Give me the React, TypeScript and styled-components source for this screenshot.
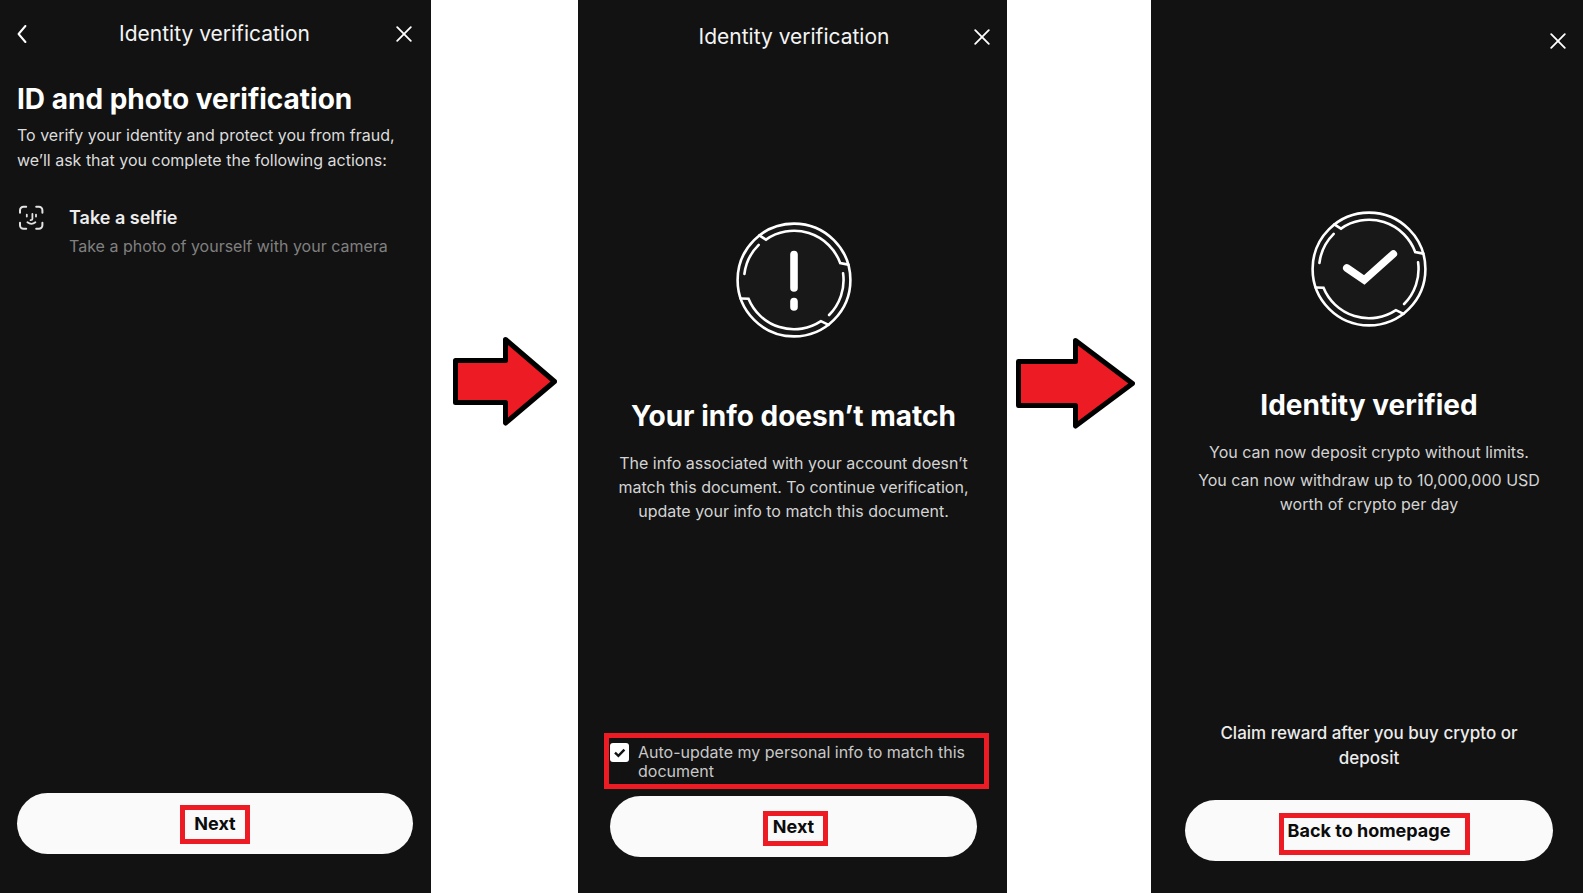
import React from 'react';
import styled, { createGlobalStyle } from 'styled-components';

const GlobalStyle = createGlobalStyle`
  *, *::before, *::after { box-sizing: border-box; }
  body {
    margin: 0;
    background: #ffffff;
    font-family: Inter, "Noto Sans", sans-serif;
    font-size: 16px;
    line-height: 24px;
  }
  h1, h2, h3, p { margin: 0; }
`;

const Flow = styled.main`
  display: grid;
  grid-template-columns: 431fr 147fr 429fr 144fr 432fr;
  min-height: 100vh;
`;

const Screen = styled.section`
  display: flex;
  flex-direction: column;
  min-width: 0;
  background: #121212;
  color: #ffffff;
`;

const Header = styled.header<{ $height: number }>`
  display: grid;
  grid-template-columns: 1fr auto 1fr;
  align-items: center;
  height: ${(p) => p.$height}px;
  padding: 0 17px 0 20px;
`;

const BackHeader = styled(Header)`
  padding: 0 19px 0 17px;
`;

const Title = styled.h2`
  grid-column: 2;
  font-size: 21px;
  font-weight: 400;
  line-height: 26px;
  color: #f4f4f4;
`;

const IconButton = styled.button<{ $end?: boolean }>`
  grid-column: ${(p) => (p.$end ? 3 : 1)};
  justify-self: ${(p) => (p.$end ? 'end' : 'start')};
  display: flex;
  padding: 0;
  border: 0;
  background: none;
  color: #ffffff;
  cursor: pointer;
`;

const Body = styled.div<{ $bottom: number; $left?: number }>`
  display: flex;
  flex-direction: column;
  flex: 1;
  padding: 0 30px ${(p) => p.$bottom}px ${(p) => p.$left ?? 32}px;
`;

const IntroBody = styled(Body)`
  padding: 15px 18px ${(p) => p.$bottom}px 17px;
`;

const Heading = styled.h1`
  font-size: 28px;
  font-weight: 700;
  line-height: 34px;
`;

const Lead = styled.p`
  margin-top: 7px;
  line-height: 25px;
  color: #dcdcdc;
`;

const Step = styled.div`
  display: flex;
  align-items: flex-start;
  gap: 24px;
  margin-top: 32px;
`;

const StepTitle = styled.h3`
  font-size: 18px;
  font-weight: 600;
  line-height: 26px;
  color: #ececec;
`;

const StepNote = styled.p`
  margin-top: 3px;
  color: #808080;
`;

const Result = styled.div<{ $top: number }>`
  display: flex;
  flex-direction: column;
  align-items: center;
  padding-top: ${(p) => p.$top}px;
  text-align: center;
`;

const ResultHeading = styled(Heading)`
  margin-top: 59px;
`;

const ResultText = styled.div`
  display: flex;
  flex-direction: column;
  gap: 4px;
  margin-top: 18px;
  color: #d4d4d4;
`;

const Footer = styled.footer`
  display: flex;
  flex-direction: column;
  margin-top: auto;
`;

const Claim = styled.p`
  margin-bottom: 29px;
  padding: 0 24px;
  font-size: 17px;
  font-weight: 500;
  line-height: 25px;
  text-align: center;
  color: #ececec;
`;

const Consent = styled.label`
  display: flex;
  align-items: flex-start;
  gap: 9px;
  margin: 0 -12px 7px -6px;
  padding: 5px 8px 3px 1px;
  border: 5px solid #ed1c24;
  line-height: 19px;
  color: #c8c8c8;
  cursor: pointer;
`;

const CheckFrame = styled.span`
  position: relative;
  display: flex;
  flex: none;
`;

const CheckInput = styled.input`
  appearance: none;
  width: 19px;
  height: 19px;
  margin: 0;
  border-radius: 3px;
  background: #ffffff;

  &:not(:checked) + svg { display: none; }
`;

const CheckMark = styled.svg`
  position: absolute;
  top: 0;
  left: 0;
  pointer-events: none;
`;

const Pill = styled.button`
  display: flex;
  align-items: center;
  justify-content: center;
  height: 61px;
  padding: 0;
  border: 0;
  border-radius: 31px;
  background: #fafafa;
  color: #0c0c0c;
  font: 700 18px/25px Inter, "Noto Sans", sans-serif;
  cursor: pointer;
`;

const PillLabel = styled.span<{ $frame: string }>`
  position: relative;

  &::after {
    content: "";
    position: absolute;
    inset: ${(p) => p.$frame};
    border: 5px solid #ed1c24;
  }
`;

const Connector = styled.div<{ $shift?: number }>`
  display: flex;
  justify-content: center;
  align-items: flex-start;
  padding: 337px ${(p) => p.$shift ?? 0}px 0 0;
`;

const Close = () => (
  <IconButton $end type="button" aria-label="Close">
    <svg width="16" height="16" viewBox="0 0 16 16" fill="none" stroke="currentColor" strokeWidth="1.8" strokeLinecap="round">
      <path d="M1.2 1.2 14.8 14.8M14.8 1.2 1.2 14.8" />
    </svg>
  </IconButton>
);

const FaceScan = () => (
  <svg width="28" height="26" viewBox="0 0 28 26" fill="none" stroke="#e4e4e4" strokeWidth="2" strokeLinecap="round">
    <path d="M3 7.7V5.2a3.5 3.5 0 0 1 3.5-3.5h2.7M19.2 1.7h2.7a3.5 3.5 0 0 1 3.5 3.5v2.5M25.4 17.7v2.5a3.5 3.5 0 0 1-3.5 3.5h-2.7M9.2 23.7H6.5A3.5 3.5 0 0 1 3 20.2v-2.5" />
    <path d="M9.8 9.6v2M19 9.6v2M15.4 9v5q0 1.2-1.8 1.2" strokeWidth="1.8" />
    <path d="M10.4 17.3q4 3.2 8 0" strokeWidth="1.8" />
  </svg>
);

const Seal = ({ children }: { children: React.ReactNode }) => (
  <svg width="120" height="120" viewBox="-60 -60 120 120" fill="none" stroke="#ffffff" strokeWidth="2.6" strokeLinecap="round">
    <circle r="56.4" fill="#181818" />
    <path d="M-34.7-44.6-28-40.4A49.2 49.2 0 0 1 46.2-17L54.4-15.4" />
    <path d="M34.5 44.9 27 41.2A49.2 49.2 0 0 1-45.5 18.8L-53.4 18.5" />
    <path d="M-35.3-35.2A49.8 49.8 0 0 0-49.6-6M49.1-6.6A49.5 49.5 0 0 1 35.1 35" />
    {children}
  </svg>
);

const Arrow = ({ width, height, points }: { width: number; height: number; points: string }) => (
  <svg width={width} height={height} viewBox={`0 0 ${width} ${height}`} aria-hidden="true">
    <polygon points={points} fill="#ed1c24" stroke="#000000" strokeWidth="5" strokeLinejoin="round" />
  </svg>
);

export default function App() {
  return (
    <>
      <GlobalStyle />
      <Flow>
        <Screen>
          <BackHeader $height={67}>
            <IconButton type="button" aria-label="Back">
              <svg width="10" height="18" viewBox="0 0 10 18" fill="none" stroke="currentColor" strokeWidth="2" strokeLinecap="round" strokeLinejoin="round">
                <path d="M8.4 1 1.6 9l6.8 8" />
              </svg>
            </IconButton>
            <Title>Identity verification</Title>
            <Close />
          </BackHeader>
          <IntroBody $bottom={39}>
            <Heading>ID and photo verification</Heading>
            <Lead>To verify your identity and protect you from fraud, we’ll ask that you complete the following actions:</Lead>
            <Step>
              <FaceScan />
              <div>
                <StepTitle>Take a selfie</StepTitle>
                <StepNote>Take a photo of yourself with your camera</StepNote>
              </div>
            </Step>
            <Footer>
              <Pill type="button">
                <PillLabel $frame="-6px -14px -8px">Next</PillLabel>
              </Pill>
            </Footer>
          </IntroBody>
        </Screen>

        <Connector>
          <Arrow width={104} height={89} points="2.5,23.5 52.5,23.5 52.5,2.5 101.5,44.5 52.5,86 52.5,65.5 2.5,65.5" />
        </Connector>

        <Screen>
          <Header $height={73}>
            <Title>Identity verification</Title>
            <Close />
          </Header>
          <Body $bottom={36}>
            <Result $top={147}>
              <Seal>
                <path d="M0-25.4V8M0 21.6V27" strokeWidth="7.6" />
              </Seal>
              <ResultHeading>Your info doesn’t match</ResultHeading>
              <ResultText>
                <p>The info associated with your account doesn’t match this document. To continue verification, update your info to match this document.</p>
              </ResultText>
            </Result>
            <Footer>
              <Consent>
                <CheckFrame>
                  <CheckInput type="checkbox" defaultChecked />
                  <CheckMark width="19" height="19" viewBox="0 0 19 19" fill="none" stroke="#121212" strokeWidth="2.4">
                    <path d="M5 9.6 8.4 12.8 14.4 6.6" />
                  </CheckMark>
                </CheckFrame>
                Auto-update my personal info to match this document
              </Consent>
              <Pill type="button">
                <PillLabel $frame="-3px -14px -7px -10px">Next</PillLabel>
              </Pill>
            </Footer>
          </Body>
        </Screen>

        <Connector $shift={7}>
          <Arrow width={119} height={92} points="2.5,24.5 59.5,24.5 59.5,3.5 116.5,46.5 59.5,89 59.5,68.5 2.5,68.5" />
        </Connector>

        <Screen>
          <Header $height={82}>
            <Close />
          </Header>
          <Body $bottom={32} $left={34}>
            <Result $top={127}>
              <Seal>
                <path d="M-22.2-1-4.8 11 24.3-15" strokeWidth="7.6" />
              </Seal>
              <ResultHeading>Identity verified</ResultHeading>
              <ResultText>
                <p>You can now deposit crypto without limits.</p>
                <p>You can now withdraw up to 10,000,000 USD worth of crypto per day</p>
              </ResultText>
            </Result>
            <Footer>
              <Claim>Claim reward after you buy crypto or deposit</Claim>
              <Pill type="button">
                <PillLabel $frame="-5px -20px -12px -9px">Back to homepage</PillLabel>
              </Pill>
            </Footer>
          </Body>
        </Screen>
      </Flow>
    </>
  );
}
